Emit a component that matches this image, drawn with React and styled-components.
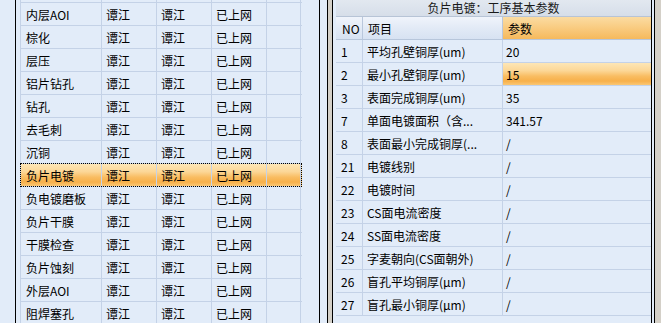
import React from 'react';
import styled, { createGlobalStyle, css } from 'styled-components';

const Global = createGlobalStyle`
  html, body { margin: 0; padding: 0; }
  body {
    width: 661px;
    height: 323px;
    overflow: hidden;
    background: #e2ecf9;
    font-family: "Noto Sans CJK SC", "Noto Sans", sans-serif;
    font-size: 12px;
    color: #000;
  }
`;

const LINE = '#c4d2e7';
const ORANGE = 'linear-gradient(to bottom, #fde6b6 0%, #fcd797 35%, #f9bd62 60%, #f7b04a 82%, #fac774 100%)';

const Page = styled.div`
  display: flex;
  height: 323px;
  overflow: hidden;
  background: #e2ecf9;
`;

const LeftPane = styled.div`
  flex: none;
  margin-left: 15px;
  width: 305px;
  height: 100%;
  box-sizing: border-box;
  border-left: 1px solid #000;
  border-right: 1px solid #000;
  padding-left: 4px;
  overflow: hidden;
`;

const Splitter = styled.div`
  flex: none;
  margin-left: ${p => p.$gap}px;
  width: ${p => p.$w}px;
  height: 100%;
  box-sizing: border-box;
  border-left: 1px solid #000;
  border-right: 1px solid #000;
  background: #d4d0c8;
`;

const RightPane = styled.div`
  flex: none;
  width: 319px;
  height: 100%;
  box-sizing: border-box;
  padding-left: 3px;
  border-right: 1px solid #000;
  overflow: hidden;
`;

const ListGrid = styled.div`
  margin-top: -20px;
  width: 281px;
  border-left: 1px solid ${LINE};
`;

const Row = styled.div`
  position: relative;
  display: flex;
  height: 23px;
  box-sizing: border-box;
  border-bottom: 1px solid ${LINE};
  ${p => p.$selected && css`
    background: ${ORANGE};
    &::after {
      content: '';
      position: absolute;
      left: -1px;
      right: 0;
      top: -1px;
      bottom: -1px;
      border: 1px dotted #000;
      pointer-events: none;
    }
  `}
`;

const Cell = styled.div`
  flex: none;
  width: ${p => p.$w}px;
  box-sizing: border-box;
  border-right: ${p => (p.$last ? 'none' : `1px solid ${LINE}`)};
  padding-left: ${p => p.$pad ?? 4}px;
  display: flex;
  align-items: center;
  white-space: nowrap;
  overflow: hidden;
  ${p => p.$hot && css`background: ${ORANGE};`}
`;

const Title = styled.div`
  height: 17px;
  box-sizing: border-box;
  display: flex;
  align-items: flex-start;
  justify-content: center;
  padding-top: 2px;
  line-height: 12px;
  background: linear-gradient(to bottom, #e2e8f0, #d6dee9);
  border-bottom: 1px solid #b7c4d6;
  color: #1a1a1a;
`;

const HeadRow = styled.div`
  display: flex;
  height: 23px;
  box-sizing: border-box;
  border-bottom: 1px solid #b7c6db;
`;

const HeadCell = styled(Cell)`
  background: ${p => (p.$sorted
    ? 'linear-gradient(to bottom, #fbdca2 0%, #f9cb80 50%, #f6b95c 100%)'
    : 'linear-gradient(to bottom, #f0f4fb 0%, #e2eaf6 50%, #d7e2f2 100%)')};
  border-right-color: #b9c7dc;
`;

const left = [
  '内层AOI', '棕化', '层压', '铝片钻孔', '钻孔', '去毛刺', '沉铜', '负片电镀',
  '负电镀磨板', '负片干膜', '干膜检查', '负片蚀刻', '外层AOI', '阻焊塞孔',
];

const params = [
  ['1', '平均孔壁铜厚(um)', '20'],
  ['2', '最小孔壁铜厚(um)', '15', true],
  ['3', '表面完成铜厚(um)', '35'],
  ['7', '单面电镀面积（含...', '341.57'],
  ['8', '表面最小完成铜厚(...', '/'],
  ['21', '电镀线别', '/'],
  ['22', '电镀时间', '/'],
  ['23', 'CS面电流密度', '/'],
  ['24', 'SS面电流密度', '/'],
  ['25', '字麦朝向(CS面朝外)', '/'],
  ['26', '盲孔平均铜厚(μm)', '/'],
  ['27', '盲孔最小铜厚(μm)', '/'],
];

const LW = [81, 55, 55, 55, 34];
const RW = [27, 140, 148];

export default function App() {
  return (
    <>
      <Global />
      <Page>
        <LeftPane>
          <ListGrid>
            <Row>
              {LW.map((w, i) => <Cell key={i} $w={w} />)}
            </Row>
            {left.map(name => (
              <Row key={name} $selected={name === '负片电镀'}>
                <Cell $w={LW[0]} $pad={5}>{name}</Cell>
                <Cell $w={LW[1]}>谭江</Cell>
                <Cell $w={LW[2]}>谭江</Cell>
                <Cell $w={LW[3]}>已上网</Cell>
                <Cell $w={LW[4]} />
              </Row>
            ))}
          </ListGrid>
        </LeftPane>
        <Splitter $gap={7} $w={6} />
        <RightPane>
          <Title>负片电镀：工序基本参数</Title>
          <HeadRow>
            <HeadCell $w={RW[0]} $pad={6}>NO</HeadCell>
            <HeadCell $w={RW[1]} $pad={5}>项目</HeadCell>
            <HeadCell $w={RW[2]} $pad={5} $sorted $last>参数</HeadCell>
          </HeadRow>
          {params.map(([no, item, val, hot]) => (
            <Row key={no}>
              <Cell $w={RW[0]} $pad={5}>{no}</Cell>
              <Cell $w={RW[1]} $pad={4}>{item}</Cell>
              <Cell $w={RW[2]} $pad={3} $last $hot={hot}>{val}</Cell>
            </Row>
          ))}
        </RightPane>
        <Splitter $gap={2} $w={8} />
      </Page>
    </>
  );
}
